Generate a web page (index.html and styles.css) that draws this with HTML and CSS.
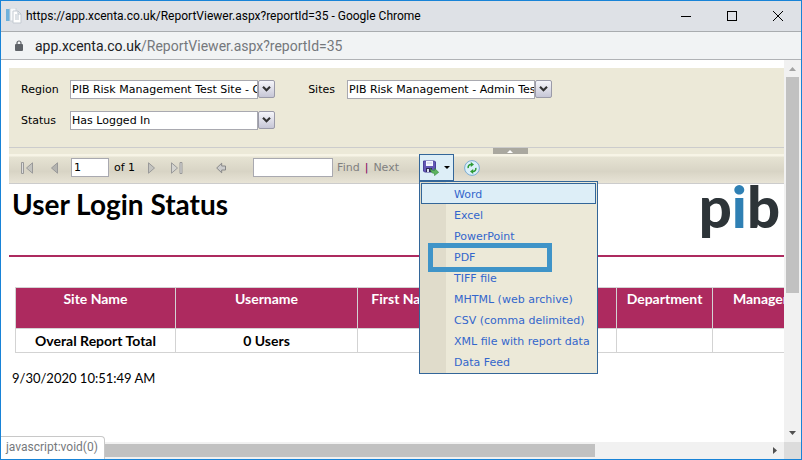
FILE: index.html
```html
<!DOCTYPE html>
<html lang="en">
<head>
  <meta charset="UTF-8">
  <title>User Login Status</title>
  <link rel="stylesheet" href="styles.css">
</head>
<body>
  <div class="window">

    <header class="titlebar">
      <svg class="favicon" width="16" height="16" viewBox="0 0 16 16">
        <rect x="0" y="1" width="4" height="12" fill="#6fb1dc"/>
        <path d="M4 0h6v13H4z" fill="#f7f9fb" stroke="#ccd3da"/>
        <path d="M7 3h5l3 3v9H7z" fill="#fff" stroke="#c3cad1"/>
        <path d="M9 7h4M9 9h4M9 11h4M12 3v3h3" fill="none" stroke="#b9c3cc"/>
      </svg>
      <span class="caption">https://app.xcenta.co.uk/ReportViewer.aspx?reportId=35 - Google Chrome</span>
      <div class="window-buttons">
        <button type="button" aria-label="Minimize"><svg width="10" height="10"><path d="M0 5.500h10" stroke="#000"/></svg></button>
        <button type="button" aria-label="Maximize"><svg width="10" height="10"><rect x=".5" y=".5" width="9" height="9" fill="none" stroke="#000"/></svg></button>
        <button type="button" aria-label="Close"><svg width="10" height="10"><path d="M0 0l10 10M10 0L0 10" stroke="#000"/></svg></button>
      </div>
    </header>

    <div class="address">
      <svg width="8" height="11" viewBox="0 0 8 11">
        <path d="M2 5V3a2 2 0 0 1 4 0v2" fill="none" stroke="#5f6368" stroke-width="1.200"/>
        <rect y="4" width="8" height="7" rx="1" fill="#5f6368"/>
      </svg>
      <span class="url">app.xcenta.co.uk<span class="path">/ReportViewer.aspx?reportId=35</span></span>
    </div>

    <div class="frame">
      <main class="page">

        <form class="params">
          <label for="region">Region</label>
          <div class="combo">
            <select id="region"><option>PIB Risk Management Test Site - Client</option></select>
            <svg class="arrow" viewBox="0 0 17 18"><path d="M4.500 6.500l4 4 4-4" fill="none" stroke="#333" stroke-width="2.400"/></svg>
          </div>
          <label for="sites" class="second">Sites</label>
          <div class="combo">
            <select id="sites"><option>PIB Risk Management - Admin Test Site</option></select>
            <svg class="arrow" viewBox="0 0 17 18"><path d="M4.500 6.500l4 4 4-4" fill="none" stroke="#333" stroke-width="2.400"/></svg>
          </div>
          <label for="status">Status</label>
          <div class="combo">
            <select id="status"><option>Has Logged In</option></select>
            <svg class="arrow" viewBox="0 0 17 18"><path d="M4.500 6.500l4 4 4-4" fill="none" stroke="#333" stroke-width="2.400"/></svg>
          </div>
        </form>

        <div class="splitter">
          <button type="button" aria-label="Hide parameters"><svg width="6" height="3"><path d="M0 3l3-3 3 3z" fill="#fff"/></svg></button>
        </div>

        <div class="toolbar">
          <div class="pager">
            <button type="button" aria-label="First page"><svg width="12" height="12"><path d="M.5 .5h2v11h-2z" fill="#ddd" stroke="#999"/><path d="M11.500 .8v10.400L5.500 6z" fill="#c4c4c0" stroke="#999"/></svg></button>
            <button type="button" aria-label="Previous page"><svg width="12" height="12"><path d="M11.500 .8v10.400L5.500 6z" fill="#b4b4b0" stroke="#999"/></svg></button>
            <input class="page-number" type="text" value="1" aria-label="Current page">
            <span>of 1</span>
            <button type="button" aria-label="Next page"><svg width="12" height="12"><path d="M2.500 .8v10.400l6-5.200z" fill="#c4c4c0" stroke="#999"/></svg></button>
            <button type="button" aria-label="Last page"><svg width="12" height="12"><path d="M.5 .8v10.400l6-5.200z" fill="#d4d4d0" stroke="#999"/><path d="M9 .5h2v11H9z" fill="#ddd" stroke="#999"/></svg></button>
          </div>
          <button type="button" class="back" aria-label="Back to parent report"><svg width="10" height="12"><path d="M.7 6l5-4.800V4h3.800v4H5.700v2.800z" fill="#ccc" stroke="#888"/></svg></button>
          <div class="search">
            <input type="text" aria-label="Find text">
            <a href="#">Find</a>
            <span class="bar">|</span>
            <a href="#">Next</a>
          </div>
          <div class="export">
            <button type="button" class="export-button" aria-label="Export">
              <svg width="16" height="16" viewBox="0 0 16 16">
                <path d="M.5 1h11l1 1v10H1.500l-1-1z" fill="#6457b5" stroke="#4b3f9b"/>
                <rect x="3" y="1" width="7" height="5" fill="#f4f5ff"/>
                <path d="M4 3h5" stroke="#c3c9e8"/>
                <path d="M3 8h6v4H3z" fill="#2e2a55"/>
                <path d="M4 9h2v3H4z" fill="#dcdff2"/>
                <path d="M7.500 8.500c1 1.500 2 2 4 2V8.300l4.200 4-4.200 3.300v-2.200c-3 0-4-2-4-4.900z" fill="#5cb45f" stroke="#328a3b" stroke-width=".6"/>
              </svg>
              <svg width="6" height="3"><path d="M0 0h6L3 3z"/></svg>
            </button>
            <ul class="menu">
              <li><a href="#" class="active">Word</a></li>
              <li><a href="#">Excel</a></li>
              <li><a href="#">PowerPoint</a></li>
              <li class="marked"><a href="#">PDF</a></li>
              <li><a href="#">TIFF file</a></li>
              <li><a href="#">MHTML (web archive)</a></li>
              <li><a href="#">CSV (comma delimited)</a></li>
              <li><a href="#">XML file with report data</a></li>
              <li><a href="#">Data Feed</a></li>
            </ul>
          </div>
          <button type="button" class="refresh" aria-label="Refresh">
            <svg width="16" height="16" viewBox="0 0 16 16">
              <circle cx="8" cy="8" r="7.400" fill="#d9effa" stroke="#7cabd2"/>
              <path d="M4.200 8.200c-.4-2.200.8-3.700 3-3.700" fill="none" stroke="#2f9a35" stroke-width="1.500"/>
              <path d="M6.800 2l3.200 2.500-3.200 2.400z" fill="#2f9a35"/>
              <path d="M11.800 7.800c.4 2.200-.8 3.700-3 3.700" fill="none" stroke="#2f9a35" stroke-width="1.500"/>
              <path d="M9.200 14L6 11.500l3.200-2.400z" fill="#2f9a35"/>
            </svg>
          </button>
        </div>

        <section class="report">
          <div class="report-head">
            <h1>User Login Status</h1>
            <div class="logo">p<span>i</span>b</div>
          </div>
          <table>
            <colgroup>
              <col class="site"><col class="user"><col class="short"><col class="wide"><col class="short"><col class="short">
            </colgroup>
            <thead>
              <tr>
                <th>Site Name</th>
                <th>Username</th>
                <th>First Name</th>
                <th></th>
                <th>Department</th>
                <th>Manager</th>
              </tr>
            </thead>
            <tbody>
              <tr>
                <td>Overal Report Total</td>
                <td>0 Users</td>
                <td></td>
                <td></td>
                <td></td>
                <td></td>
              </tr>
            </tbody>
          </table>
          <p class="printed">9/30/2020 10:51:49 AM</p>
        </section>
      </main>

      <div class="scroll vertical">
        <svg width="7" height="4"><path d="M0 4l3.500-4L7 4z" fill="#a3a3a3"/></svg>
        <div class="track"><div class="thumb"></div></div>
        <svg width="7" height="4"><path d="M0 0h7L3.500 4z" fill="#505050"/></svg>
      </div>
      <div class="scroll horizontal">
        <svg width="4" height="7"><path d="M4 0v7L0 3.500z" fill="#a3a3a3"/></svg>
        <div class="track"><div class="thumb"></div></div>
        <svg width="4" height="7"><path d="M0 0v7l4-3.500z" fill="#505050"/></svg>
      </div>
      <div class="corner"></div>
    </div>

    <div class="link-status">javascript:void(0)</div>
  </div>
</body>
</html>
```
FILE: styles.css
```css
* {
  box-sizing: border-box;
}

body {
  margin: 0;
  font-family: "DejaVu Sans", Verdana, sans-serif;
  font-size: 11px;
  color: #000;
}

button {
  display: flex;
  align-items: center;
  justify-content: center;
  padding: 0;
  border: 0;
  background: none;
}

input,
select {
  height: 19px;
  border: 1px solid #a9a9b0;
  border-radius: 0;
  background: #fff;
  color: #000;
  font: inherit;
}

a {
  text-decoration: none;
}

/* Browser window */
.window {
  position: relative;
  display: flex;
  flex-direction: column;
  height: 100vh;
  border: 1px solid #1883d7;
  background: #fff;
}

.titlebar {
  display: flex;
  align-items: center;
  height: 31px;
  padding-left: 5px;
  border-bottom: 1px solid #a9acaf;
  background: #dee1e6;
  font-family: "Segoe UI", Roboto, sans-serif;
  font-size: 12px;
}

.caption {
  flex: 1;
  padding-left: 4px;
  white-space: nowrap;
}

.window-buttons {
  display: flex;
}

.window-buttons button {
  width: 46px;
  height: 28px;
}

.address {
  display: flex;
  align-items: center;
  gap: 12px;
  height: 28px;
  padding-left: 14px;
  border-bottom: 1px solid #b0b2b5;
  background: #f1f3f4;
  font-family: "Segoe UI", Roboto, sans-serif;
  font-size: 14px;
}

.url {
  color: #202124;
}

.path {
  color: #75787c;
}

.frame {
  flex: 1;
  display: grid;
  grid-template-columns: minmax(0, 1fr) 17px;
  grid-template-rows: minmax(0, 1fr) 17px;
  min-height: 0;
}

.page {
  padding: 8px 0 0 8px;
  overflow: hidden;
}

/* Report parameters */
.params {
  display: grid;
  grid-template-columns: 37px 205px 48px 205px;
  column-gap: 12px;
  row-gap: 12px;
  align-items: center;
  padding: 12px 12px 17px;
  background: #ece9d8;
}

.params label {
  white-space: nowrap;
}

.params .second {
  justify-self: end;
}

.combo {
  display: flex;
}

.combo select {
  flex: 1;
  min-width: 0;
  padding: 0 0 0 1px;
  appearance: none;
  overflow: hidden;
}

.arrow {
  width: 17px;
  height: 18px;
  border: 1px solid #9a9aa8;
  border-radius: 2px;
  background: linear-gradient(#f6f6fa, #c6c6d6);
}

.splitter {
  display: flex;
  justify-content: center;
  height: 7px;
  padding-left: 227px;
  border-top: 1px solid #ccc;
  background: #ece9d8;
}

.splitter button {
  width: 35px;
  height: 6px;
  background: #aaa89f;
}

/* Toolbar */
.toolbar {
  display: flex;
  align-items: center;
  height: 30px;
  padding: 0 0 2px 12px;
  border-bottom: 1px solid #ccc;
  background: linear-gradient(#f7f4e6 0, #f7f4e6 2px, #e6e3d3 3px, #d8d4c5 60%, #e8e4d6);
}

.pager {
  display: flex;
  align-items: center;
  gap: 13px;
}

.pager span {
  margin: 0 -2px 0 -8px;
}

.page-number {
  width: 38px;
  padding: 0 2px;
}

.pager button {
  width: 12px;
}

.back {
  margin-left: 33px;
}

.search {
  display: flex;
  align-items: center;
  gap: 4px;
  margin-left: 27px;
}

.search input {
  width: 80px;
}

.search a {
  color: #808080;
}

.bar {
  padding: 0 1px;
  color: #800060;
}

.export {
  position: relative;
  margin-left: 20px;
}

.export-button {
  gap: 5px;
  width: 35px;
  height: 27px;
  border: 1px solid #369;
  background: #ddeef7;
}

.refresh {
  margin-left: 10px;
}

.menu {
  position: absolute;
  z-index: 2;
  top: 100%;
  left: 0;
  margin: 0;
  padding: 1px;
  border: 1px solid #369;
  list-style: none;
  white-space: nowrap;
  background: linear-gradient(90deg, #e0dccb 26px, #ece9d8 26px);
}

.menu li {
  position: relative;
}

.menu a {
  display: block;
  height: 21px;
  padding: 0 5px 0 32px;
  border: 1px solid transparent;
  line-height: 21px;
  color: #36c;
}

.menu .active {
  border-color: #369;
  background: #ddeef7;
}

/* Callout frame around an entry */
.marked::after {
  content: "";
  position: absolute;
  inset: -3px 44px -5px 7px;
  border: 5px solid #3f94c8;
}

/* Report body */
.report {
  font-family: "Century Gothic", Lato, sans-serif;
  font-size: 13px;
}

.report-head {
  display: flex;
  justify-content: space-between;
  height: 73px;
  padding: 0 4px 0 3px;
  border-bottom: 2px solid #ad2a5f;
}

h1 {
  margin: 0;
  font-size: 28px;
  line-height: 40px;
}

.logo {
  font-size: 58px;
  font-weight: 900;
  line-height: 44px;
  color: #2d3438;
}

.logo span {
  color: #2f80b4;
}

table {
  width: 794px;
  margin: 30px 0 0 6px;
  border-collapse: collapse;
  table-layout: fixed;
  font-size: 14px;
}

.site {
  width: 160px;
}

.user {
  width: 182px;
}

.short {
  width: 96px;
}

.wide {
  width: 163px;
}

th,
td {
  padding: 2px;
  border: 1px solid #d3d3d3;
  font-weight: bold;
  text-align: center;
  white-space: nowrap;
}

th {
  height: 41px;
  background: #ad2a5f;
  color: #fff;
  vertical-align: top;
}

td {
  height: 24px;
}

.printed {
  margin: 17px 0 0 3px;
}

/* Scrollbars */
.scroll {
  display: flex;
  align-items: center;
  justify-content: space-between;
  background: #f1f1f1;
}

.vertical {
  flex-direction: column;
  padding: 7px 0;
}

.horizontal {
  padding: 0 7px;
}

.track {
  flex: 1;
}

.vertical .track {
  width: 13px;
  margin: 6px 0;
}

.horizontal .track {
  height: 13px;
  margin: 0 6px;
}

.thumb {
  background: #c1c1c1;
}

.vertical .thumb {
  height: 62%;
}

.horizontal .thumb {
  width: 77%;
  height: 100%;
}

.corner {
  background: #dcdcdc;
}

.link-status {
  position: absolute;
  bottom: 0;
  left: 0;
  padding: 2px 6px 3px 5px;
  border: 1px solid #c8c8c8;
  border-width: 1px 1px 0 0;
  border-radius: 0 4px 0 0;
  background: #fff;
  font-family: "Segoe UI", Roboto, sans-serif;
  font-size: 12px;
  line-height: 17px;
  color: #75787c;
}
```
